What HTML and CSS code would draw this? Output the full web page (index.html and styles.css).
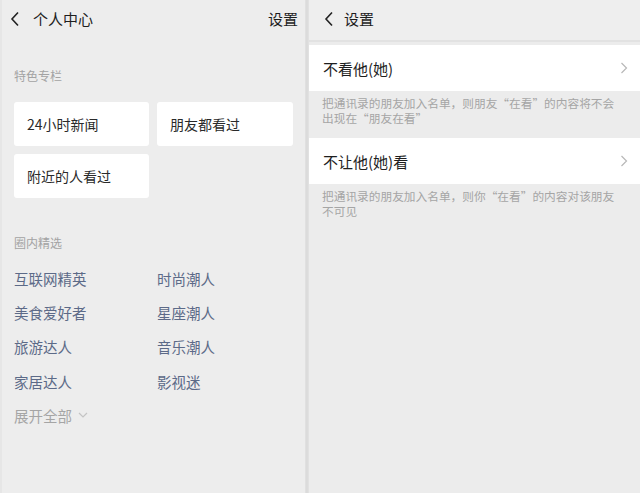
FILE: index.html
```html
<!DOCTYPE html>
<html lang="zh">
<head>
<meta charset="utf-8">
<link rel="stylesheet" href="styles.css">
</head>
<body>
<div class="screen">
  <section class="left">
    <header class="bar">
      <svg class="back" width="10" height="16" viewBox="0 0 10 16"><path d="M8 1.5 L2 8 L8 14.5" fill="none" stroke="#222" stroke-width="1.6"/></svg>
      <span class="title">个人中心</span>
      <span class="action">设置</span>
    </header>
    <div class="label first">特色专栏</div>
    <div class="cards">
      <div class="card">24小时新闻</div>
      <div class="card">朋友都看过</div>
      <div class="card">附近的人看过</div>
    </div>
    <div class="label second">圈内精选</div>
    <div class="links">
      <span>互联网精英</span><span>时尚潮人</span>
      <span>美食爱好者</span><span>星座潮人</span>
      <span>旅游达人</span><span>音乐潮人</span>
      <span>家居达人</span><span>影视迷</span>
    </div>
    <div class="more">展开全部
      <svg width="10" height="8" viewBox="0 0 10 8"><path d="M1 2 L5 6 L9 2" fill="none" stroke="#c4c4c4" stroke-width="1.2"/></svg>
    </div>
  </section>
  <div class="divider"></div>
  <section class="right">
    <header class="bar rbar">
      <svg class="back" width="10" height="16" viewBox="0 0 10 16"><path d="M8 1.5 L2 8 L8 14.5" fill="none" stroke="#222" stroke-width="1.6"/></svg>
      <span class="title">设置</span>
    </header>
    <div class="row">
      <span>不看他(她)</span>
      <svg width="8" height="12" viewBox="0 0 8 12"><path d="M1.5 1 L6.5 6 L1.5 11" fill="none" stroke="#b8b8b8" stroke-width="1.2"/></svg>
    </div>
    <p class="desc">把通讯录的朋友加入名单，则朋友“在看”的内容将不会出现在“朋友在看”</p>
    <div class="row">
      <span>不让他(她)看</span>
      <svg width="8" height="12" viewBox="0 0 8 12"><path d="M1.5 1 L6.5 6 L1.5 11" fill="none" stroke="#b8b8b8" stroke-width="1.2"/></svg>
    </div>
    <p class="desc">把通讯录的朋友加入名单，则你“在看”的内容对该朋友不可见</p>
  </section>
</div>
</body>
</html>
```

FILE: styles.css
```css
* { box-sizing: border-box; }
html, body {
  margin: 0;
  padding: 0;
  width: 640px;
  height: 493px;
  overflow: hidden;
  background: #ececec;
  font-family: "Noto Sans CJK SC", "Noto Sans", sans-serif;
}
.screen {
  display: flex;
  height: 493px;
}
.left {
  width: 305px;
  background: #ededed;
  border-left: 2px solid #e6e6e6;
}
.divider {
  width: 4px;
  background: linear-gradient(to right, #e2e2e2, #d9d9d9 50%, #e4e4e4);
}
.right {
  flex: 1;
  background: #ececec;
}
.bar {
  height: 40px;
  display: flex;
  align-items: center;
  padding-left: 8px;
  padding-bottom: 3px;
}
.back { flex: none; }
.title {
  margin-left: 13px;
  font-size: 15px;
  color: #1e1e1e;
}
.action {
  margin-left: auto;
  margin-right: 7px;
  font-size: 15px;
  color: #1e1e1e;
}
.label {
  font-size: 12px;
  color: #a3a3a3;
  padding-left: 12px;
  line-height: 16px;
}
.label.first { margin-top: 28px; }
.label.second { margin-top: 37px; }
.cards {
  display: grid;
  grid-template-columns: 135px 136px;
  grid-auto-rows: 44px;
  gap: 8px 8px;
  padding-left: 12px;
  margin-top: 18px;
}
.card {
  background: #fff;
  border-radius: 3px;
  display: flex;
  align-items: center;
  padding-left: 13px;
  font-size: 14px;
  color: #2a2a2a;
}
.links {
  display: grid;
  grid-template-columns: 143px 143px;
  grid-auto-rows: 34.3px;
  padding-left: 12px;
  margin-top: 10px;
  font-size: 14.5px;
  color: #5c6a88;
}
.links span { display: flex; align-items: center; }
.more {
  padding-left: 12px;
  height: 34px;
  display: flex;
  align-items: center;
  gap: 6px;
  font-size: 14.5px;
  color: #a5a5a5;
}
.rbar {
  height: 42px;
  padding-left: 15px;
  background: #eeeeee;
  border-bottom: 2px solid #e2e2e2;
}
.rbar .title { margin-left: 10px; }
.row {
  margin-top: 3px;
  height: 46px;
  background: #fff;
  display: flex;
  align-items: center;
  justify-content: space-between;
  padding: 0 12px 0 14px;
  font-size: 15px;
  color: #1e1e1e;
}
.desc {
  margin: 0;
  padding: 5px 20px 8px 13px;
  height: 44px;
  font-size: 11.7px;
  line-height: 14.5px;
  color: #a5a5a5;
  font-feature-settings: "fwid";
}
```
